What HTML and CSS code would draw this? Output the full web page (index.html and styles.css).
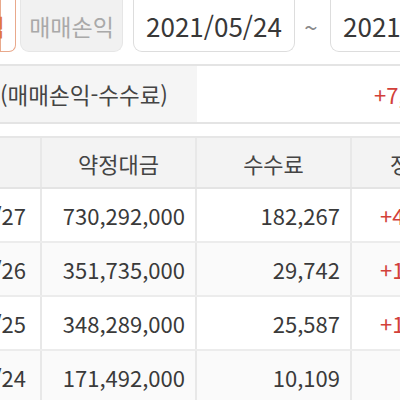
FILE: index.html
```html
<!DOCTYPE html>
<html lang="ko">
<head>
<meta charset="utf-8">
<link rel="stylesheet" href="styles.css">
</head>
<body>
<div class="page">
  <div class="filter">
    <div class="btn btn-active"><span>손익</span></div>
    <div class="btn btn-off">매매손익</div>
    <div class="date">2021/05/24</div>
    <div class="tilde">~</div>
    <div class="date">2021/05/27</div>
  </div>

  <div class="summary">
    <div class="sum-label">(매매손익-수수료)</div>
    <div class="sum-value"><span class="red">+7,654,321</span></div>
  </div>

  <div class="table">
    <div class="row head">
      <div class="cell c0"></div>
      <div class="cell c1">약정대금</div>
      <div class="cell c2">수수료</div>
      <div class="cell c3 left">정산금액</div>
    </div>
    <div class="row">
      <div class="cell c0"><span class="d">2021/05/27</span></div>
      <div class="cell c1">730,292,000</div>
      <div class="cell c2">182,267</div>
      <div class="cell c3 red">+4,351,733</div>
    </div>
    <div class="row alt">
      <div class="cell c0"><span class="d">2021/05/26</span></div>
      <div class="cell c1">351,735,000</div>
      <div class="cell c2">29,742</div>
      <div class="cell c3 red">+1,212,258</div>
    </div>
    <div class="row">
      <div class="cell c0"><span class="d">2021/05/25</span></div>
      <div class="cell c1">348,289,000</div>
      <div class="cell c2">25,587</div>
      <div class="cell c3 red">+1,014,413</div>
    </div>
    <div class="row alt">
      <div class="cell c0"><span class="d">2021/05/24</span></div>
      <div class="cell c1">171,492,000</div>
      <div class="cell c2">10,109</div>
      <div class="cell c3 red">+62,891</div>
    </div>
  </div>
</div>
</body>
</html>
```

FILE: styles.css
```css
html, body {
  margin: 0;
  padding: 0;
  background: #ffffff;
  overflow: hidden;
}
body {
  width: 400px;
  height: 400px;
  font-family: "Noto Sans CJK KR", "Noto Sans", sans-serif;
  color: #3a3a3a;
}
.page {
  width: 520px;
}
.filter {
  display: flex;
  align-items: stretch;
  height: 52px;
}
.btn {
  box-sizing: border-box;
  display: flex;
  align-items: center;
  font-size: 23px;
}
.btn-active {
  width: 16px;
  border: 1px solid #e9a98c;
  border-top: none;
  border-radius: 0 0 7px 0;
  background: #fff;
  color: #e0743f;
  justify-content: flex-end;
  padding-right: 10px;
  white-space: nowrap;
}
.btn-active span {
  flex: none;
}
.btn-off {
  width: 103px;
  margin-left: 4px;
  justify-content: center;
  background: #f1f1f1;
  border: 1px solid #e6e6e6;
  border-top: none;
  color: #a9a9a9;
  border-radius: 0 0 9px 9px;
}
.date {
  box-sizing: border-box;
  width: 162px;
  margin-left: 10px;
  display: flex;
  align-items: center;
  justify-content: center;
  font-size: 26px;
  color: #383838;
  border: 1px solid #dddddd;
  border-top: none;
  border-radius: 0 0 9px 9px;
  background: #fff;
}
.date:last-child {
  margin-left: 0;
}
.tilde {
  width: 35px;
  display: flex;
  align-items: center;
  justify-content: center;
  font-size: 24px;
  color: #8a8a8a;
  padding-right: 3px;
  box-sizing: border-box;
}
.summary {
  margin-top: 12px;
  display: grid;
  grid-template-columns: 197px 1fr;
  height: 56px;
  border-top: 2px solid #e4e4e4;
  border-bottom: 2px solid #e4e4e4;
  width: 400px;
}
.sum-label {
  background: #f5f5f5;
  display: flex;
  align-items: center;
  font-size: 22.5px;
  color: #444;
  white-space: nowrap;
  overflow: hidden;
}
.sum-value {
  display: flex;
  align-items: center;
  justify-content: flex-end;
  overflow: hidden;
  white-space: nowrap;
  font-size: 22px;
}
.sum-value span {
  flex: none;
  margin-right: -84px;
}
.red {
  color: #d2403a;
}
.table {
  margin-top: 12px;
  border-top: 2px solid #e6e6e6;
}
.row {
  display: grid;
  grid-template-columns: 42px 155px 155px 155px;
  height: 54px;
  border-bottom: 2px solid #ececec;
  box-sizing: border-box;
}
.row.head {
  height: 51px;
  background: #f3f3f3;
  border-bottom: 2px solid #e4e4e4;
}
.row.alt {
  background: #fafafa;
}
.cell {
  display: flex;
  align-items: center;
  justify-content: flex-end;
  padding-right: 10px;
  font-size: 22px;
  border-right: 2px solid #e8e8e8;
  white-space: nowrap;
  overflow: hidden;
}
.head .cell {
  justify-content: center;
  padding-right: 0;
  font-size: 22px;
  color: #444;
}
.head .cell.left {
  justify-content: flex-start;
  padding-left: 38px;
}
.row .c0 {
  overflow: visible;
  padding-right: 0;
}
.d {
  flex: none;
  margin-right: 14px;
}
.c3 {
  padding-right: 15px;
}
```
